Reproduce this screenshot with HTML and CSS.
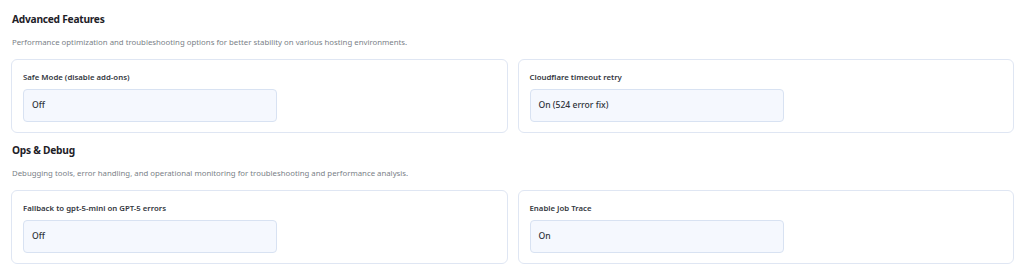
FILE: index.html
```html
<!DOCTYPE html>
<html lang="en">
<head>
    <meta charset="UTF-8">
    <meta name="viewport" content="width=device-width, initial-scale=1.0">
    <title>Settings</title>
    <link rel="stylesheet" href="styles.css">
</head>
<body>
    <section class="group">
        <h2>Advanced Features</h2>
        <p class="desc">Performance optimization and troubleshooting options for better stability on various hosting environments.</p>
        <div class="cards">
            <div class="card">
                <label>Safe Mode (disable add-ons)</label>
                <div class="select">Off</div>
            </div>
            <div class="card">
                <label>Cloudflare timeout retry</label>
                <div class="select">On (524 error fix)</div>
            </div>
        </div>
    </section>
    <section class="group">
        <h2>Ops &amp; Debug</h2>
        <p class="desc">Debugging tools, error handling, and operational monitoring for troubleshooting and performance analysis.</p>
        <div class="cards">
            <div class="card">
                <label>Fallback to gpt-5-mini on GPT-5 errors</label>
                <div class="select">Off</div>
            </div>
            <div class="card">
                <label>Enable Job Trace</label>
                <div class="select">On</div>
            </div>
        </div>
    </section>
</body>
</html>
```
FILE: styles.css
```css
body{
    margin: 0;
    padding: 2px 10px 0 11px;
    background-color: #fff;
    font-family: "Noto Sans", "Open Sans", sans-serif;
    color: #2b2f36;
}

.group{
    padding-top: 9px;
}

.group h2{
    margin: 0 0 0 1px;
    font-size: 10.2px;
    line-height: 16px;
    font-weight: 700;
    letter-spacing: -0.25px;
    color: #1e2128;
}

.desc{
    margin: 9px 0 0 1px;
    font-size: 7.8px;
    line-height: 12px;
    color: #7a7f88;
}

.cards{
    display: grid;
    grid-template-columns: 1fr 1fr;
    gap: 10px;
    margin-top: 11px;
}

.card{
    border: 1px solid #dfe6f3;
    border-radius: 6px;
    padding: 11px 11px 10px;
}

.card label{
    display: block;
    font-size: 7.8px;
    line-height: 12px;
    font-weight: 600;
    color: #33373e;
}

.select{
    width: 236px;
    height: 31px;
    margin-top: 6px;
    padding: 0 8px;
    border: 1px solid #d8e2f2;
    border-radius: 4px;
    background-color: #f5f8fe;
    font-size: 8.6px;
    line-height: 31px;
    font-weight: 500;
    color: #2f333a;
}
```
